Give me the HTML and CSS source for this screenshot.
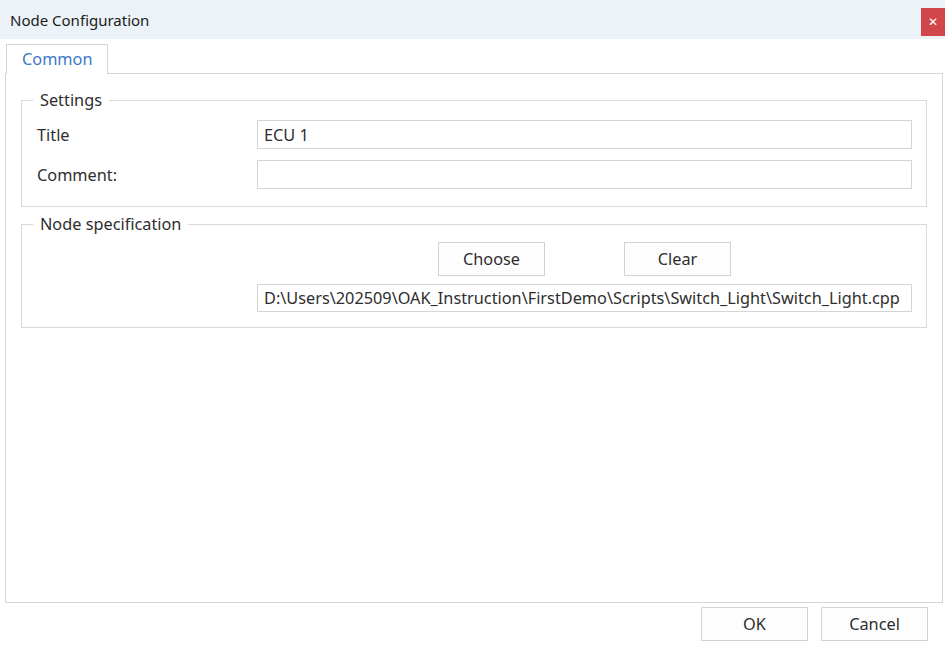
FILE: index.html
```html
<!DOCTYPE html>
<html lang="en">
<head>
  <meta charset="UTF-8" />
  <meta name="viewport" content="width=device-width, initial-scale=1.0"/>
  <title>Node Configuration</title>
  <link rel="stylesheet" href="styles.css">
</head>
<body>
  <div class="dialog">
    <div class="titlebar">
      <span class="titlebar-text">Node Configuration</span>
      <button class="close-btn" title="Close">&#x2715;</button>
    </div>

    <div class="tabs">
      <div class="tab active">Common</div>
    </div>

    <div class="panel">
      <!-- Settings -->
      <fieldset class="group">
        <legend>Settings</legend>
        <div class="row">
          <label for="title">Title</label>
          <input type="text" id="title" value="ECU 1">
        </div>
        <div class="row">
          <label for="comment">Comment:</label>
          <input type="text" id="comment" value="">
        </div>
      </fieldset>

      <!-- Node specification -->
      <fieldset class="group spec">
        <legend>Node specification</legend>
        <div class="row">
          <span></span>
          <div class="spec-buttons">
            <button class="btn">Choose</button>
            <button class="btn">Clear</button>
          </div>
        </div>
        <div class="row">
          <span></span>
          <input type="text" class="path" value="D:\Users\202509\OAK_Instruction\FirstDemo\Scripts\Switch_Light\Switch_Light.cpp">
        </div>
      </fieldset>
    </div>

    <div class="footer">
      <button class="btn">OK</button>
      <button class="btn">Cancel</button>
    </div>
  </div>
</body>
</html>
```

FILE: styles.css
```css
* {
  margin: 0;
  padding: 0;
  box-sizing: border-box;
  font-family: 'Noto Sans', 'Open Sans', sans-serif;
}

body {
  width: 945px;
  height: 652px;
  background: #fff;
  color: #2e2e2e;
  font-size: 16.3px;
  overflow: hidden;
}

.dialog {
  height: 100%;
  display: flex;
  flex-direction: column;
}

.titlebar {
  height: 39px;
  flex: none;
  display: flex;
  align-items: center;
  background: #ebf3f8;
  padding-left: 10px;
}

.titlebar-text {
  color: #1b1b1b;
  font-size: 15px;
}

.close-btn {
  margin-left: auto;
  align-self: flex-start;
  margin-top: 8px;
  width: 24px;
  height: 28px;
  border: none;
  background: #d2454b;
  color: #fff;
  font-size: 12px;
  font-weight: bold;
  font-family: 'DejaVu Sans', sans-serif;
  cursor: pointer;
}

.tabs {
  display: flex;
  flex: none;
  margin-top: 5px;
  padding-left: 6px;
}

.tab {
  width: 102px;
  height: 30px;
  line-height: 28px;
  padding-left: 15px;
  border: 1px solid #d4d4d4;
  border-bottom: none;
  background: #fff;
  color: #3b78c8;
  font-size: 16.3px;
  margin-bottom: -1px;
  position: relative;
  z-index: 1;
}

.panel {
  flex: 1;
  margin: 0 2px 0 5px;
  border: 1px solid #d6d6d6;
  padding: 0 15px;
}

.group {
  border: 1px solid #dadada;
  padding: 0 14px 15px 15px;
}

.group:first-child {
  margin-top: 16px;
  padding-bottom: 17px;
}

.group.spec {
  margin-top: 7px;
  padding-bottom: 15px;
}

.group legend {
  margin-left: -4px;
  padding: 0 7px;
  line-height: 20px;
  font-size: 16.3px;
  color: #2e2e2e;
}

.row {
  display: grid;
  grid-template-columns: 220px 1fr;
  align-items: center;
}

.group .row:first-of-type {
  margin-top: 10px;
}

.group .row + .row {
  margin-top: 11px;
}

.spec .row:first-of-type {
  margin-top: 8px;
}

.spec .row + .row {
  margin-top: 8px;
}

.row label {
  color: #2e2e2e;
}

input {
  width: 100%;
  height: 29px;
  padding: 0 6px;
  border: 1px solid #d5d5d5;
  background: #fff;
  color: #2e2e2e;
  font-size: 16.3px;
  outline: none;
}

input.path {
  height: 28px;
}

.spec-buttons {
  display: flex;
  gap: 79px;
  padding-left: 181px;
}

.btn {
  width: 107px;
  height: 34px;
  border: 1px solid #d2d2d2;
  background: #fdfdfd;
  color: #2e2e2e;
  font-size: 16.3px;
  cursor: pointer;
}

.btn:hover {
  background: #f2f2f2;
}

.footer {
  height: 49px;
  flex: none;
  display: flex;
  justify-content: flex-end;
  gap: 13px;
  padding: 4px 17px 0 0;
}
```
